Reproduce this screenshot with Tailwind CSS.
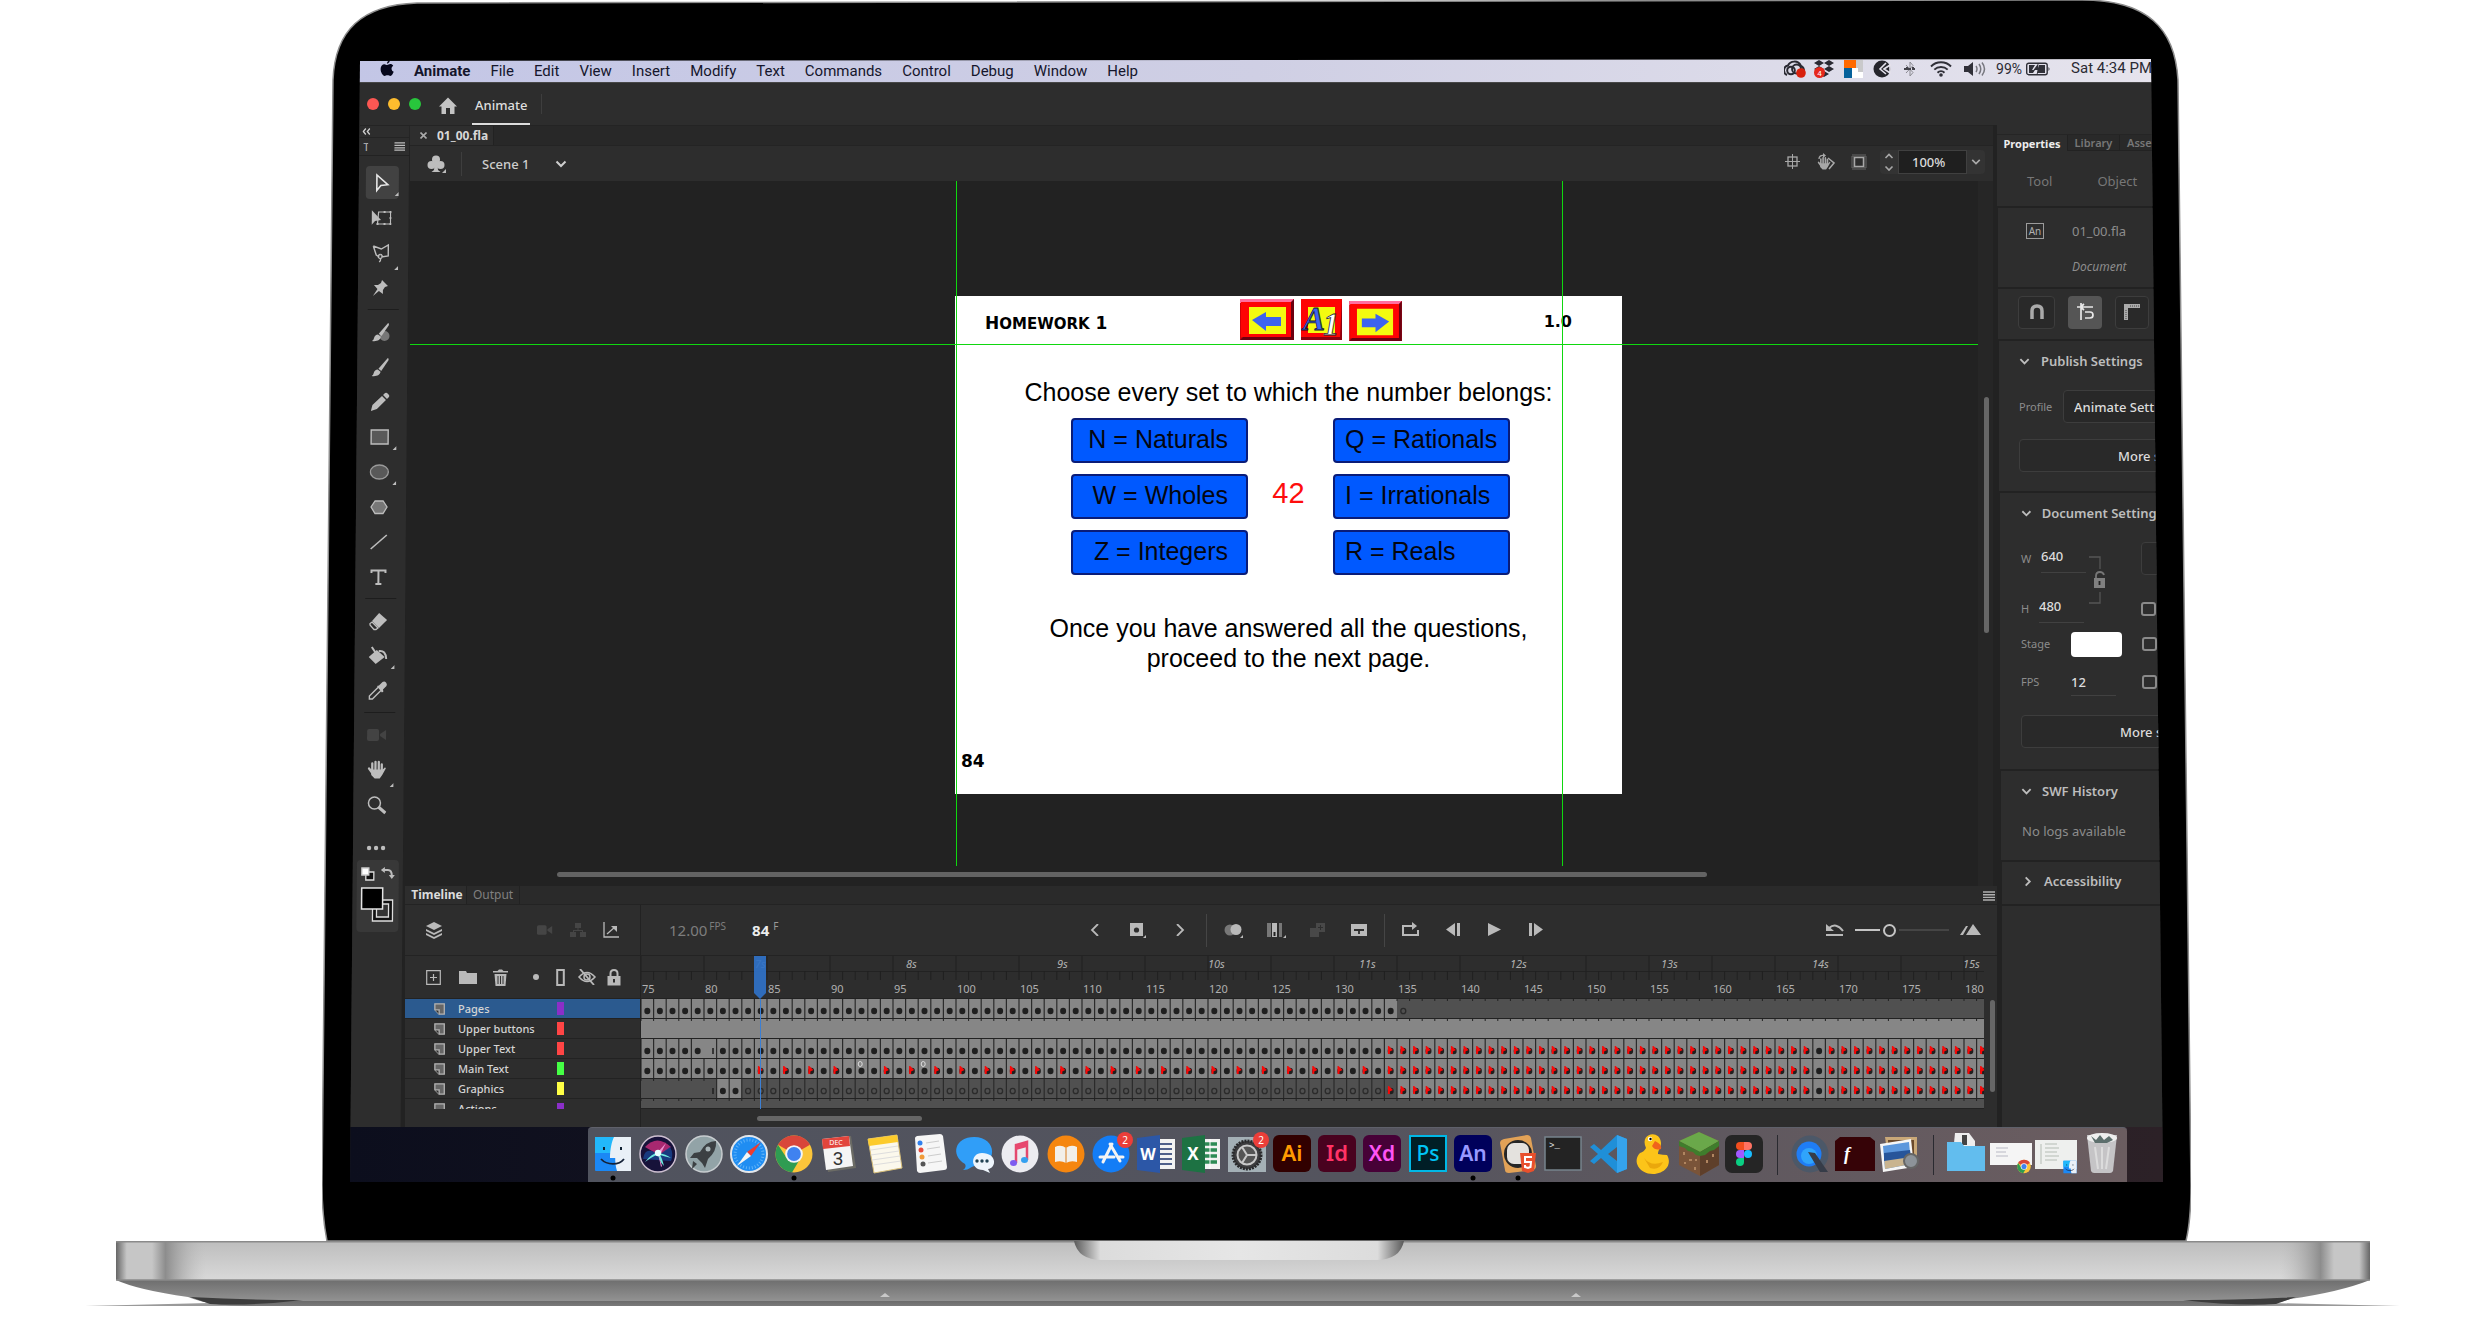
<!DOCTYPE html>
<html lang="en">
<head>
<meta charset="utf-8">
<title>Animate</title>
<script src="https://cdn.jsdelivr.net/npm/@tailwindcss/browser@4"></script>
</head>
<body class="bg-white overflow-x-hidden font-['Noto_Sans',sans-serif] text-[13px] leading-4">

<!-- shared icon shapes -->
<svg class="hidden" aria-hidden="true">
  <defs>
    <symbol id="down" viewBox="0 0 12 12"><path d="M1.500 3.500 6 8l4.500-4.500" fill="none" stroke="currentColor" stroke-width="2"/></symbol>
    <symbol id="right" viewBox="0 0 12 12"><path d="M4 1.500 8.500 6 4 10.500" fill="none" stroke="currentColor" stroke-width="2"/></symbol>
    <symbol id="menu" viewBox="0 0 12 12"><path d="M0 2h12M0 4.700h12M0 7.400h12M0 10h12" stroke="currentColor" stroke-width="1.400"/></symbol>
    <symbol id="layer" viewBox="0 0 14 14"><path d="M1 1h11v12H6L1 8z" fill="#666" stroke="#b4b4b4" stroke-width="1.500"/><path d="M1 8h5v5" fill="#2d2d2d" stroke="#b4b4b4" stroke-width="1.500"/></symbol>
    <symbol id="cam" viewBox="0 0 20 20"><rect x="0" y="4" width="12" height="12" rx="2" fill="currentColor"/><path d="M13 9l6-4v10l-6-4z" fill="currentColor"/></symbol>
    <symbol id="hand" viewBox="0 0 20 20"><path d="M5.500 3.500v7M8.700 1.800v8M12 2v8M15 4.500v6M2.300 8.500l3.700 5" stroke="currentColor" stroke-width="2.300" stroke-linecap="round" fill="none"/><path d="M4.500 9.500H16l2-2c1.500 0 1.200 1.200.5 2L15.500 15 13 18.500H8L4.500 15z" fill="currentColor"/></symbol>
    <symbol id="brush" viewBox="0 0 20 20"><path d="M17.500 1c1 .5 1 1.500.5 2.500L11 14 8.200 11.800z" fill="currentColor"/><path d="M7.500 12.500l2.800 2.300c-.3 3-3.800 5-8.800 4.200 1.500-1 1.500-1.500 2-3 .6-2 2-3.500 4-3.500z" fill="currentColor"/></symbol>
    <symbol id="chrome" viewBox="0 0 38 38"><circle cx="19" cy="19" r="18.500" fill="#fbc53a"/><path d="M19 19 3 9.700A18.500 18.500 0 0 1 35 9.700z" fill="#d9463a"/><path d="M3 9.700a18.500 18.500 0 0 0 14 27.700L25 24 11 22z" fill="#2f9c52"/><circle cx="19" cy="19" r="8.800" fill="#f5f5f5"/><circle cx="19" cy="19" r="6.900" fill="#3f82f0"/></symbol>
    <symbol id="finder" viewBox="0 0 38 38"><rect x="1" y="2" width="36" height="34" rx="1" fill="#1b88f5"/><path d="M1 2h20v16H1z" fill="#22b8fb"/><path d="M20 2h17v34H23c-1.500-5-1.800-9-1.800-13H16C16 15 17.500 7 20 2z" fill="#e9f0f7"/><path d="M10 12v3M27 12v3" stroke="#123" stroke-width="2"/><path d="M7 24c6 6.500 18 6.500 23 0" fill="none" stroke="#152238" stroke-width="1.800"/></symbol>
  </defs>
</svg>

<main class="relative">
<div class="grid grid-cols-[322fr_1869fr_286fr]">
<div class="col-start-2 relative min-w-0 pt-[59px] pb-[59px] px-7">

  <!-- laptop lid -->
  <svg class="absolute inset-0 w-full h-full -z-10" viewBox="0 0 1869 1241" preserveAspectRatio="none" aria-hidden="true">
    <path d="M11 80C13 30 40 5 95 3L1760 0C1825 0 1853 28 1856 80L1869 1185Q1869 1220 1864 1241H5Q0 1215 0 1185Z" fill="#000" stroke="#8d8d8d" stroke-width="1.500"/>
  </svg>

  <!-- display -->
  <div class="bg-[#222] overflow-hidden [clip-path:polygon(10px_2px,calc(100%_-_12px)_0,100%_100%,0_100%)]">

    <!-- system menu bar -->
    <header class="h-[23px] bg-linear-to-r from-[#c3c6e6] via-[#cfcfe4] to-[#e6e4ed] flex items-center pl-[30px] pr-[11px] text-[#15162c] font-[Roboto,sans-serif] text-[15px]">
      <svg class="w-[14px] h-[17px] mr-5 -mt-1" viewBox="0 0 14 17"><path d="M9.800.5C9.900 2 8.600 3.600 7 3.700 6.900 2.200 8.200.7 9.800.5zM7.200 5c.8 0 1.700-.9 3.100-.9 1.200 0 2.300.6 2.900 1.600-2.500 1.600-2 5 .5 6.100-.6 1.700-1.900 4-3.300 4.100-1.100 0-1.500-.7-2.900-.7s-1.800.7-2.900.7C2.800 15.900.6 12.400.6 9.100.6 6 2.500 4.200 4.400 4.200c1.200 0 2 .8 2.800.8z" fill="#06071c"/></svg>
      <nav class="flex gap-5 flex-1">
        <a href="#" class="font-bold">Animate</a><a href="#">File</a><a href="#">Edit</a><a href="#">View</a><a href="#">Insert</a><a href="#">Modify</a><a href="#">Text</a><a href="#">Commands</a><a href="#">Control</a><a href="#">Debug</a><a href="#">Window</a><a href="#">Help</a>
      </nav>
      <div class="flex items-center pb-1 text-[#2a2a33] text-sm">
        <svg class="w-[22px] h-[18px] mr-2" viewBox="0 0 22 18"><path d="M3 15a5 5 0 0 1 1-9.500C6 1 14-.5 17 6c2 1 3 3 3 5" fill="none" stroke="#2a2a33" stroke-width="2"/><circle cx="7" cy="10.500" r="3.800" fill="none" stroke="#2a2a33" stroke-width="2"/><circle cx="12.500" cy="9" r="4.500" fill="none" stroke="#2a2a33" stroke-width="1.800"/><circle cx="17" cy="13" r="4.800" fill="#d8200c"/></svg>
        <svg class="w-5 h-[18px] mr-[10px]" viewBox="0 0 20 18"><path d="M5 0l5 3-5 3-5-3zM15 0l5 3-5 3-5-3zM5 6l5 3-5 3-5-3zM15 6l5 3-5 3-5-3zM10 11l5 3-5 3-5-3z" fill="#2a2a33"/><circle cx="5.500" cy="12.500" r="5.500" fill="#e5281c"/><text x="5.500" y="15.500" text-anchor="middle" font-size="8" fill="#fff">4</text></svg>
        <svg class="w-[19px] h-[18px] mr-[10px]" viewBox="0 0 19 18"><path d="M0 0h12v8H0z" fill="#ff6a00"/><path d="M12 0h7v12h-7z" fill="#c9c9cb"/><path d="M0 8h8v10H0z" fill="#05619b"/><path d="M8 8h6v4h5v6H8z" fill="#fff"/></svg>
        <svg class="w-[18px] h-[18px] mr-[12px]" viewBox="0 0 18 18"><circle cx="9" cy="9" r="8.500" fill="#25252c"/><path d="M13 3L7 9l6 5M11 9l6-4v8z" fill="none" stroke="#e4e2ec" stroke-width="1.600"/></svg>
        <svg class="w-[14px] h-[18px] mr-[13px]" viewBox="0 0 14 18"><path d="M3 5l7 7.500L7 16V2l3 3.500L3 13" fill="none" stroke="#8b8b92"/><path d="M1 9h12M4 7v4M10 7v4" stroke="#44444c" stroke-width="2" stroke-dasharray="3 1"/></svg>
        <svg class="w-[22px] h-[16px] mr-[12px]" viewBox="0 0 22 16"><path d="M1 5.500a14 14 0 0 1 20 0M4.300 8.700a9.500 9.500 0 0 1 13.400 0M7.500 11.700a5 5 0 0 1 7 0" fill="none" stroke="#303038" stroke-width="1.900"/><circle cx="11" cy="14" r="1.800" fill="#303038"/></svg>
        <svg class="w-[22px] h-[16px] mr-[10px]" viewBox="0 0 22 16"><path d="M0 5h4l5-4v14l-5-4H0z" fill="#303038"/><path d="M12 5q2 3 0 6M15 3q3.500 5 0 10M18 1.500q5 6.500 0 13" fill="none" stroke="#77777e" stroke-width="1.500"/></svg>
        <span class="mr-1 text-sm">99%</span>
        <svg class="w-[25px] h-[14px] mr-5" viewBox="0 0 25 14"><rect x=".7" y="1.200" width="20.500" height="11.500" rx="2" fill="none" stroke="#303038" stroke-width="1.400"/><path d="M3 3h6l-3 5h3l-2 3H3zM13 3h6v8h-8l4-5h-3z" fill="#303038"/><path d="M12.500 1l-5 7h4l-1 5 5.500-7h-4z" fill="#303038"/><path d="M22.500 5v4q2-2 0-4" fill="#303038"/></svg>
        <span class="text-[15px]">Sat 4:34 PM</span>
      </div>
    </header>

    <!-- window title bar -->
    <div class="h-[43px] bg-[#2d2d2d] border-t border-[#474747] flex items-center pl-[17px]">
      <div class="flex gap-[9px]"><span class="size-3 rounded-full bg-[#fc5753]"></span><span class="size-3 rounded-full bg-[#fdbc2e]"></span><span class="size-3 rounded-full bg-[#28c63c]"></span></div>
      <button class="ml-[18px] mt-1" aria-label="Home"><svg class="size-[18px]" viewBox="0 0 18 18"><path d="M9 .5L0 9.500h2.500V17H7v-6h4v6h4.500V9.500H18z" fill="#c3c3c3"/></svg></button>
      <button class="ml-[15px] h-[41px] pt-1 px-[3px] font-medium text-[#dedede] border-b-2 border-[#dcdcdc]">Animate</button>
      <span class="ml-[11px] h-5 w-px bg-[#3e3e3e]"></span>
    </div>

    <div class="flex h-[1002px]">

      <!-- tool palette -->
      <aside class="w-[55px] shrink-0 bg-[#2d2d2d] -skew-x-[0.5deg] relative z-10 text-[#bdbdbd]">
        <div class="h-[13px] border-y border-[#242424] pl-2 flex items-center"><svg class="w-2 h-[7px]" viewBox="0 0 8 7"><path d="M3.500.5L1 3.500l2.500 3M7.500.5L5 3.500l2.500 3" fill="none" stroke="#d0d0d0" stroke-width="1.300"/></svg></div>
        <div class="h-[18px] flex items-center justify-between border-b border-[#222] pl-[9px] pr-1"><span class="w-[5px] overflow-hidden text-[11px]">T</span><svg class="w-[11px] h-[11px]"><use href="#menu"/></svg></div>
        <div class="pt-[9px] pl-[11px] flex flex-col w-[45px] items-stretch">
          <button aria-label="Selection" class="h-[35px] flex items-center justify-center relative"><span class="bg-[#424242] rounded-sm w-[33px] h-[33px] flex items-center justify-center"><svg class="size-5" viewBox="0 0 20 20"><path d="M5 2v15.500l4-5 7-.8z" fill="none" stroke="#e6e6e6" stroke-width="1.600"/></svg></span><svg class="absolute right-0 bottom-1 size-1"><path d="M4 0v4H0z" fill="currentColor"/></svg></button>
          <button aria-label="Free transform" class="h-[35px] flex items-center justify-center"><svg class="size-5" viewBox="0 0 20 20"><path d="M7 4h12v12H6z" fill="none" stroke="currentColor" stroke-width="1.200"/><path d="M0 2v15l3.500-4 6-1z" fill="currentColor"/><path d="M18 3h2v2h-2zM18 15h2v2h-2zM12 3h2v2h-2zM12 15h2v2h-2zM5 15h2v2H5zM18 9h2v2h-2z" fill="currentColor"/></svg></button>
          <button aria-label="Lasso" class="h-[35px] flex items-center justify-center relative"><svg class="size-5" viewBox="0 0 20 20"><path d="M2 3l8 3 7-4v11l-7 1M2 3l3 9 3 2M9 11.500a2 2 0 1 0 .1 0M9 15.500q1 2-1 3.500" fill="none" stroke="currentColor" stroke-width="1.400"/></svg><svg class="absolute right-0 bottom-0 size-1"><path d="M4 0v4H0z" fill="currentColor"/></svg></button>
          <button aria-label="Asset warp" class="h-[35px] flex items-center justify-center"><svg class="size-5" viewBox="0 0 20 20"><path d="M11 2l6 6-3 1-2 3v4l-4-3-6 5 4.500-7L3 7h4l3-2z" fill="currentColor"/></svg></button>
          <hr class="my-1 ml-1 w-[31px] border-[#1d1d1d]">
          <button aria-label="Fluid brush" class="h-[35px] flex items-center justify-center"><svg class="size-5" viewBox="0 0 20 20"><circle cx="14" cy="14" r="5" fill="#777"/><use href="#brush"/></svg></button>
          <button aria-label="Classic brush" class="h-[35px] flex items-center justify-center"><svg class="size-5"><use href="#brush"/></svg></button>
          <button aria-label="Pencil" class="h-[35px] flex items-center justify-center"><svg class="size-5" viewBox="0 0 20 20"><path d="M1 19l1.500-6L12 4l4 4-9 9zM13 3l2-2q1-.5 2 0l2 2q.5 1 0 2l-2 2z" fill="currentColor"/></svg></button>
          <button aria-label="Rectangle" class="h-[35px] flex items-center justify-center relative"><svg class="size-5" viewBox="0 0 20 20"><rect x="1.500" y="3" width="17" height="14" fill="#595959" stroke="currentColor" stroke-width="1.400"/></svg><svg class="absolute right-0 bottom-1 size-1"><path d="M4 0v4H0z" fill="currentColor"/></svg></button>
          <button aria-label="Oval" class="h-[35px] flex items-center justify-center relative"><svg class="size-5" viewBox="0 0 20 20"><ellipse cx="10" cy="10" rx="9" ry="7" fill="#595959" stroke="#999" stroke-width="1.400"/></svg><svg class="absolute right-0 bottom-1 size-1"><path d="M4 0v4H0z" fill="currentColor"/></svg></button>
          <button aria-label="PolyStar" class="h-[35px] flex items-center justify-center"><svg class="size-5" viewBox="0 0 20 20"><path d="M6 4h8l4 6-4 6.500H6L2 10z" fill="#777" stroke="currentColor" stroke-width="1.300"/></svg></button>
          <button aria-label="Line" class="h-[35px] flex items-center justify-center"><svg class="size-5" viewBox="0 0 20 20"><path d="M2 17L18 3" stroke="currentColor" stroke-width="1.600"/></svg></button>
          <button aria-label="Text" class="h-[35px] flex items-center justify-center"><svg class="size-5" viewBox="0 0 20 20"><path d="M3 6V3.500h14V6M10 3v14M7 17h6" stroke="currentColor" stroke-width="2" fill="none"/></svg></button>
          <hr class="my-1 ml-1 w-[31px] border-[#1d1d1d]">
          <button aria-label="Eraser" class="h-[35px] flex items-center justify-center"><svg class="size-5" viewBox="0 0 20 20"><path d="M11 2l8 7-8 8-7-7z" fill="currentColor"/><path d="M4 11l6 6-2 1.500H6L2 14v-1.500z" fill="none" stroke="currentColor" stroke-width="1.300"/></svg></button>
          <button aria-label="Paint bucket" class="h-[35px] flex items-center justify-center relative"><svg class="size-5" viewBox="0 0 20 20"><path d="M9 4l8 7-9 7-7-7z" fill="currentColor"/><path d="M4 1l6 9M11 5q7-1 7.500 8" fill="none" stroke="currentColor" stroke-width="2"/></svg><svg class="absolute right-0 bottom-1 size-1"><path d="M4 0v4H0z" fill="currentColor"/></svg></button>
          <button aria-label="Eyedropper" class="h-[35px] flex items-center justify-center"><svg class="size-5" viewBox="0 0 20 20"><path d="M11 6l3 3-9 9H2v-3z" fill="none" stroke="currentColor" stroke-width="1.400"/><path d="M9.500 5l2-.5L15 1q2-1 3.500.5T19 5l-3.500 3.500.5 2-1.500 1z" fill="currentColor"/></svg></button>
          <hr class="my-1 ml-1 w-[31px] border-[#1d1d1d]">
          <button aria-label="Camera" class="h-[35px] flex items-center justify-center text-[#434343]"><svg class="size-5"><use href="#cam"/></svg></button>
          <button aria-label="Hand" class="h-[35px] flex items-center justify-center relative"><svg class="size-5"><use href="#hand"/></svg><svg class="absolute right-0 bottom-0 size-1"><path d="M4 0v4H0z" fill="currentColor"/></svg></button>
          <button aria-label="Zoom" class="h-[35px] flex items-center justify-center"><svg class="size-5" viewBox="0 0 20 20"><circle cx="8" cy="8" r="6" fill="none" stroke="currentColor" stroke-width="1.500"/><path d="M12 12l7 6" stroke="currentColor" stroke-width="3"/></svg></button>
          <button aria-label="More tools" class="h-[22px] mt-[15px] flex items-center justify-center"><svg class="w-5 h-2" viewBox="0 0 20 8"><circle cx="3" cy="4" r="2.200" fill="currentColor"/><circle cx="10" cy="4" r="2.200" fill="currentColor"/><circle cx="17" cy="4" r="2.200" fill="currentColor"/></svg></button>
        </div>
        <div class="ml-[9px] mt-px w-[42px] h-[72px] rounded bg-[#383838]">
          <svg class="w-full h-full" viewBox="0 0 42 72"><path d="M9 12h8v8H9z" fill="#111" stroke="#ddd" stroke-width="1.300"/><path d="M5 8h7v7H5z" fill="#fff" stroke="#ccc" stroke-width="1.300"/><path d="M27 10h4q4 0 4 6" fill="none" stroke="#bdbdbd" stroke-width="2"/><path d="M24 10l4-3v6zM32 15h6l-3 4z" fill="#bdbdbd"/><path d="M16 40h20v21H16z" fill="#111" stroke="#ddd" stroke-width="1.300"/><path d="M20 44h12v13H20z" fill="#333" stroke="#ddd" stroke-width="1.300"/><path d="M5 28h21v21H5z" fill="#000" stroke="#e4e4e4" stroke-width="1.500"/></svg>
        </div>
      </aside>

      <section class="flex-1 min-w-0">
        <div class="ml-[5px] mr-1">
          <div class="h-[21px] bg-[#282828] flex border-y border-[#242424]"><button class="flex items-center gap-[10px] w-[84px] pl-[10px] bg-[#2e2e2e] border-r border-[#222] text-xs font-bold text-[#d8d8d8]"><svg class="size-[7px]" viewBox="0 0 7 7"><path d="M.5.5l6 6M6.500.5l-6 6" stroke="#aaa" stroke-width="1.600"/></svg>01_00.fla</button></div>
          <div class="h-[35px] bg-[#2d2d2d] flex items-center text-[#cecece]">
            <button aria-label="Edit symbols" class="ml-[17px]"><svg class="w-[19px] h-[18px]" viewBox="0 0 19 18"><circle cx="9" cy="4.500" r="4" fill="#bdbdbd"/><circle cx="4.500" cy="10" r="4" fill="#bdbdbd"/><circle cx="13.500" cy="10" r="4" fill="#bdbdbd"/><path d="M8 5h2l1 10 2.500 2h-9L7 15z" fill="#bdbdbd"/><path d="M19 14v4h-4z" fill="#bdbdbd"/></svg></button>
            <span class="w-px h-6 bg-[#3e3e3e] ml-[15px] mr-5"></span>
            <button class="flex items-center gap-[26px] font-medium">Scene 1<svg class="size-3"><use href="#down"/></svg></button>
            <div class="ml-auto flex items-center text-[#a8a8a8] pb-1">
              <button aria-label="Center stage"><svg class="size-[15px]" viewBox="0 0 15 15"><path d="M7.500 0v15M0 7.500h15" stroke="currentColor"/><rect x="3" y="3" width="9" height="9" fill="none" stroke="currentColor" stroke-width="1.300"/></svg></button>
              <button aria-label="Rotate" class="ml-[17px]"><svg class="w-[18px] h-[18px]" viewBox="0 0 18 18"><svg x="0" y="3" width="14" height="15"><use href="#hand"/></svg><path d="M11 5l6 5-5 6" fill="none" stroke="currentColor" stroke-width="1.500"/><path d="M2 6q0-4 5-3.500" fill="none" stroke="currentColor" stroke-width="1.300"/><path d="M6 0l3 2.500L6 5z" fill="currentColor"/></svg></button>
              <button aria-label="Clip content" class="ml-4"><svg class="size-[16px]" viewBox="0 0 16 16"><rect x="1.500" y="1.500" width="13" height="13" fill="none" stroke="#666" stroke-width="3" stroke-dasharray="1 1"/><rect x="3.500" y="3.500" width="9" height="9" fill="#2d2d2d" stroke="currentColor" stroke-width="1.500"/></svg></button>
              <div class="ml-[13px] mr-2 flex items-center bg-[#333] rounded-sm h-6">
                <svg class="w-[18px] h-5" viewBox="0 0 18 20"><path d="M5.500 6L9 2.500 12.500 6M5.500 14.500L9 18l3.500-3.500" fill="none" stroke="currentColor" stroke-width="1.600"/></svg>
                <input aria-label="Zoom" value="100%" class="w-[69px] h-6 bg-[#1f1f1f] border border-[#404040] text-[#dadada] text-[13px] font-medium pl-[13px]">
                <svg class="w-[10px] h-[10px] mx-1"><use href="#down"/></svg>
              </div>
            </div>
          </div>

          <!-- pasteboard -->
          <div class="h-[705px] relative bg-[#222] border-r-[15px] border-[#262626] pt-[115px] pl-[545px]">
            <div class="w-[667px] h-[498px] bg-white text-black font-['Liberation_Sans',Arial,sans-serif] text-[25px] leading-[30px]">
              <div class="h-[47px] flex items-center pl-[30px] pr-[50px] font-['DejaVu_Sans',sans-serif] font-bold">
                <span class="w-[255px] text-[17px] pt-2">H<span class="text-[15px] uppercase">omework</span> 1</span>
                <div class="flex gap-[7px]">
                  <button aria-label="Previous page"><svg class="w-[54px] h-[41px]" viewBox="0 0 54 41"><path d="M0 0h54v41H0z" fill="#d00008"/><path d="M0 0h54l-3 4H0z" fill="#ff6fa0"/><path d="M54 0v41H0l3-3h48V3z" fill="#6d0010"/><path d="M1 3h50v35H1z" fill="#fe0404"/><path d="M9 8h37v27H9z" fill="#f3fb10"/><path d="M12 21l14-8v5h15v9H26v5z" fill="#3d63ef"/></svg></button>
                  <button aria-label="Contents"><svg class="w-[41px] h-[41px]" viewBox="0 0 41 41"><path d="M0 0h41v41H0z" fill="#8d0010"/><path d="M0 0h41l-2 38H0z" fill="#fe0404"/><path d="M7 8h27v26H7z" fill="#f3fb10"/><text x="2" y="31" font-family="Liberation Serif" font-style="italic" font-weight="bold" font-size="33" fill="#3d63ef" stroke="#112" stroke-width=".8">A</text><text x="22" y="36" font-family="Liberation Serif" font-style="italic" font-weight="bold" font-size="32" fill="#fff" stroke="#222" stroke-width=".8">1</text></svg></button>
                  <button aria-label="Next page" class="pt-[3px]"><svg class="w-[53px] h-[40px]" viewBox="0 0 54 41"><path d="M0 0h54v41H0z" fill="#d00008"/><path d="M0 0h54l-3 4H0z" fill="#ff6fa0"/><path d="M54 0v41H0l3-3h48V3z" fill="#6d0010"/><path d="M1 3h50v35H1z" fill="#fe0404"/><path d="M8 8h37v27H8z" fill="#f3fb10"/><path d="M41 21l-14-8v5H13v9h14v5z" fill="#3d63ef"/></svg></button>
                </div>
                <span class="ml-auto text-base pt-1">1.0</span>
              </div>
              <p class="text-center pt-[34px]">Choose every set to which the number belongs:</p>
              <div class="grid grid-cols-[177px_85px_177px] gap-y-[11px] justify-center pl-1 mt-[11px] text-[#04060f]">
                <button class="h-[45px] bg-[#0059ff] border-2 border-[#0a1c78] rounded pr-[18px] pb-1 text-right whitespace-nowrap">N = Naturals</button>
                <span class="row-span-3 self-center text-center text-[29px] text-[#fe0d0d] pb-2 pr-1">42</span>
                <button class="h-[45px] bg-[#0059ff] border-2 border-[#0a1c78] rounded px-[10px] pb-1 text-left whitespace-nowrap">Q = Rationals</button>
                <button class="h-[45px] bg-[#0059ff] border-2 border-[#0a1c78] rounded pr-[18px] pb-1 text-right whitespace-nowrap">W = Wholes</button>
                <button class="h-[45px] bg-[#0059ff] border-2 border-[#0a1c78] rounded px-[10px] pb-1 text-left whitespace-nowrap">I = Irrationals</button>
                <button class="h-[45px] bg-[#0059ff] border-2 border-[#0a1c78] rounded pr-[18px] pb-1 text-right whitespace-nowrap">Z = Integers</button>
                <button class="h-[45px] bg-[#0059ff] border-2 border-[#0a1c78] rounded px-[10px] pb-1 text-left whitespace-nowrap">R = Reals</button>
              </div>
              <p class="text-center mt-[38px]">Once you have answered all the questions,<br>proceed to the next page.</p>
              <p class="pl-[6px] mt-[73px] font-['DejaVu_Sans',sans-serif] font-bold text-[17px]">84</p>
            </div>
            <i class="absolute left-0 right-0 top-[163px] h-px bg-[#0fd80f]"></i>
            <i class="absolute top-0 h-[685px] left-[546px] w-px bg-[#0fd80f]"></i>
            <i class="absolute top-0 h-[685px] left-[1152px] w-px bg-[#0fd80f]"></i>
            <i class="absolute -right-[11px] top-[216px] w-[5px] h-[236px] rounded-full bg-[#666]"></i>
            <i class="absolute left-[147px] bottom-[9px] w-[1150px] h-[5px] rounded-full bg-[#636363]"></i>
          </div>
        </div>

        <!-- timeline -->
        <div class="bg-[#2d2d2d]">
          <div class="h-[19px] flex bg-[#2a2a2a] border-b border-[#232323] text-xs text-[#808080]">
            <button class="w-[62px] pl-[3px] bg-[#2d2d2d] border-r border-[#222] font-bold text-[#dcdcdc]">Timeline</button>
            <button class="w-[53px] border-r border-[#222]">Output</button>
            <svg class="size-3 ml-auto mt-1 mr-[2px] text-[#b0b0b0]"><use href="#menu"/></svg>
          </div>
          <div class="h-[51px] flex border-b border-[#232323] text-[#b9b9b9]">
            <div class="w-[236px] shrink-0 border-r border-[#222] flex items-center pl-5 pr-[21px]">
              <button aria-label="Layers" class="mr-auto"><svg class="size-[18px]" viewBox="0 0 18 18"><path d="M9 1l8 4-8 4-8-4zM1 8l8 4 8-4v2l-8 4-8-4zM1 12l8 4 8-4v2l-8 4-8-4z" fill="currentColor"/></svg></button>
              <div class="flex items-center gap-[17px]">
                <svg class="size-4 text-[#454545]"><use href="#cam"/></svg>
                <svg class="size-4 text-[#454545]" viewBox="0 0 16 16"><path d="M5 1h6v5H5zM0 10h6v5H0zM10 10h6v5h-6zM7.500 6h1v2H13v2h-1V9H4v1H3V8h4.500z" fill="currentColor"/></svg>
                <svg class="size-4" viewBox="0 0 16 16"><path d="M1 0v15h15M4 12l8-7" fill="none" stroke="currentColor" stroke-width="1.300"/><path d="M8 4h6v6z" fill="currentColor"/></svg>
              </div>
            </div>
            <div class="flex items-center w-[448px] pl-7 whitespace-nowrap">
              <span class="text-[15px] text-[#7d7d7d]">12.00</span><span class="text-[10px] text-[#7d7d7d] pb-2 pl-[2px]">FPS</span>
              <span class="ml-[26px] text-[15px] font-bold text-[#ececec]">84</span><span class="ml-1 text-[10px] pb-2 text-[#999]">F</span>
            </div>
            <div class="flex items-center">
              <button aria-label="Previous keyframe" class="w-[12px]"><svg class="size-3" viewBox="0 0 12 12"><path d="M9 0L3 6l6 6" fill="none" stroke="currentColor" stroke-width="1.800"/></svg></button>
              <button aria-label="Insert keyframe" class="ml-[29px]"><svg class="w-[16px] h-4" viewBox="0 0 16 16"><path d="M0 1h13v13H0z" fill="currentColor"/><circle cx="6.500" cy="8" r="2.600" fill="#2d2d2d"/><path d="M16 13v3h-3z" fill="currentColor"/></svg></button>
              <button aria-label="Next keyframe" class="ml-[28px]"><svg class="size-3" viewBox="0 0 12 12"><path d="M3 0l6 6-6 6" fill="none" stroke="currentColor" stroke-width="1.800"/></svg></button>
              <span class="w-px h-[33px] bg-[#454545] ml-[20px] mr-[17px]"></span>
              <button aria-label="Onion skin"><svg class="w-[19px] h-4" viewBox="0 0 19 16"><circle cx="6" cy="8" r="5.500" fill="#777"/><circle cx="12" cy="7.500" r="5.500" fill="currentColor"/><path d="M19 13v3h-3z" fill="currentColor"/></svg></button>
              <button aria-label="Edit multiple frames" class="ml-[24px]"><svg class="w-[19px] h-4" viewBox="0 0 19 16"><path d="M0 1h4v14H0zM12 1h3v14h-3z" fill="#777"/><path d="M5 1h5v14H5z" fill="currentColor"/><path d="M7.500 10v4" stroke="#222" stroke-width="2"/><path d="M19 13v3h-3z" fill="currentColor"/></svg></button>
              <button aria-label="Create tween" class="ml-[24px]"><svg class="w-[18px] h-4" viewBox="0 0 18 16"><path d="M0 6h9v9H0zM6 1h9v9H6z" fill="#484848"/><path d="M8 5.500h5M10.500 3v5" stroke="#2d2d2d"/></svg></button>
              <button aria-label="Frame view" class="ml-[23px]"><svg class="w-4 h-4" viewBox="0 0 16 16"><path d="M0 2h16v12H0z" fill="currentColor"/><path d="M3 8h10M8 8v4" stroke="#2d2d2d" stroke-width="1.800"/></svg></button>
              <span class="w-px h-[33px] bg-[#454545] mx-[17px]"></span>
              <button aria-label="Loop"><svg class="w-[18px] h-4" viewBox="0 0 18 16"><path d="M5 4H1v9h15V8M5 4h7" fill="none" stroke="currentColor" stroke-width="2"/><path d="M10 0l5 4-5 4z" fill="currentColor"/></svg></button>
              <button aria-label="Step back" class="ml-[26px]"><svg class="size-4" viewBox="0 0 16 16"><path d="M9 1v13L0 7.500zM11 1h3v13h-3z" fill="currentColor"/></svg></button>
              <button aria-label="Play" class="ml-[25px]"><svg class="size-4" viewBox="0 0 16 16"><path d="M1 1l13 6.500L1 14z" fill="currentColor"/></svg></button>
              <button aria-label="Step forward" class="ml-[25px]"><svg class="size-4" viewBox="0 0 16 16"><path d="M6 1v13l9-6.500zM1 1h3v13H1z" fill="currentColor"/></svg></button>
            </div>
            <div class="ml-auto mr-[16px] flex items-center">
              <svg class="w-[18px] h-4" viewBox="0 0 18 16"><path d="M3 6q7-6 14 3" fill="none" stroke="currentColor" stroke-width="2"/><path d="M0 2v7h8zM0 12h17v2H0z" fill="currentColor"/></svg>
              <input type="range" aria-label="Timeline zoom" min="0" max="100" value="34" class="appearance-none w-[94px] h-[14px] mx-[11px] bg-[linear-gradient(to_right,#c4c4c4_25px,transparent_25px,transparent_44px,#454545_44px)] bg-[length:100%_2px] bg-center bg-no-repeat [&::-webkit-slider-thumb]:appearance-none [&::-webkit-slider-thumb]:size-[13px] [&::-webkit-slider-thumb]:rounded-full [&::-webkit-slider-thumb]:border-2 [&::-webkit-slider-thumb]:border-[#c4c4c4] [&::-webkit-slider-thumb]:border-solid">
              <svg class="w-[21px] h-4" viewBox="0 0 21 16"><path d="M6 13l7-11 8 11zM0 13l6-9h2l-5 9z" fill="currentColor"/></svg>
            </div>
          </div>
          <div class="flex h-[153px]">
            <div class="w-[236px] shrink-0 border-r border-[#222] text-[11px] font-medium text-[#d4d4d4]">
              <div class="h-[43px] flex items-center border-b border-[#222] pl-[21px]">
                <svg class="size-[15px]" viewBox="0 0 15 15"><path d="M.7.7h13.600v13.600H.7zM7.500 4v7M4 7.500h7" fill="none" stroke="#b9b9b9" stroke-width="1.200"/></svg>
                <svg class="w-[18px] h-4 ml-[18px]" viewBox="0 0 18 16"><path d="M0 2h7l1 2h10v11H0z" fill="#b9b9b9"/></svg>
                <svg class="w-[15px] h-[17px] ml-4" viewBox="0 0 15 17"><path d="M0 2h4.500L6 .5h3L10.500 2H15v1.500H0zM1.500 5h12l-1 12h-10z" fill="#b9b9b9"/><path d="M5 7v8M7.500 7v8M10 7v8" stroke="#333"/></svg>
                <svg class="w-2 h-2 ml-6" viewBox="0 0 8 8"><circle cx="4" cy="4" r="3" fill="#b9b9b9"/></svg>
                <svg class="w-[9px] h-[17px] ml-4" viewBox="0 0 9 17"><path d="M1.200 1h6.600v15H1.200z" fill="none" stroke="#b9b9b9" stroke-width="2"/></svg>
                <svg class="w-[18px] h-4 ml-[13px]" viewBox="0 0 18 16"><path d="M1 8q8-9 16 0-8 9-16 0z" fill="none" stroke="#b9b9b9" stroke-width="1.600"/><circle cx="9" cy="8" r="3" fill="none" stroke="#b9b9b9" stroke-width="1.500"/><path d="M2 0l14 16" stroke="#b9b9b9" stroke-width="1.800"/></svg>
                <svg class="w-[14px] h-[17px] ml-[11px]" viewBox="0 0 14 17"><path d="M3.500 8V4.500q0-3.500 3.500-3.500t3.500 3.500V8" fill="none" stroke="#b9b9b9" stroke-width="2"/><path d="M.5 7h13v9.500H.5z" fill="#b9b9b9"/><path d="M7 10v3.500" stroke="#2d2d2d" stroke-width="2"/></svg>
              </div>
              <ul class="h-[110px] overflow-hidden">
                <li class="h-5 flex items-center border-b border-[#222] pl-[29px] bg-[#2b5a8f]"><svg class="w-3 h-3 mr-3"><use href="#layer"/></svg><span class="w-[99px]">Pages</span><i class="w-[7px] h-[13px] bg-[#8b2fc8]"></i></li>
                <li class="h-5 flex items-center border-b border-[#222] pl-[29px]"><svg class="w-3 h-3 mr-3"><use href="#layer"/></svg><span class="w-[99px]">Upper buttons</span><i class="w-[7px] h-[13px] bg-[#ff4545]"></i></li>
                <li class="h-5 flex items-center border-b border-[#222] pl-[29px]"><svg class="w-3 h-3 mr-3"><use href="#layer"/></svg><span class="w-[99px]">Upper Text</span><i class="w-[7px] h-[13px] bg-[#ff4545]"></i></li>
                <li class="h-5 flex items-center border-b border-[#222] pl-[29px]"><svg class="w-3 h-3 mr-3"><use href="#layer"/></svg><span class="w-[99px]">Main Text</span><i class="w-[7px] h-[13px] bg-[#45ff45]"></i></li>
                <li class="h-5 flex items-center border-b border-[#222] pl-[29px]"><svg class="w-3 h-3 mr-3"><use href="#layer"/></svg><span class="w-[99px]">Graphics</span><i class="w-[7px] h-[13px] bg-[#ffff45]"></i></li>
                <li class="h-5 flex items-center pl-[29px]"><svg class="w-3 h-3 mr-3"><use href="#layer"/></svg><span class="w-[99px]">Actions</span><i class="w-[7px] h-[13px] bg-[#8b2fc8]"></i></li>
              </ul>
            </div>
            <div class="flex-1 min-w-0 relative overflow-hidden text-[11px] text-[#b0b0b0]">
              <div class="h-[43px] relative">
                <svg id="ruler" class="absolute inset-0 w-[1400px] h-[43px]"></svg>
                <div id="seconds" class="relative flex h-4 pl-[114px] italic"></div>
                <div id="numbers" class="relative flex pt-[9px]"></div>
              </div>
              <svg id="frames" class="block w-[1400px] h-[110px]"></svg>
              <svg class="absolute left-[113px] top-0 w-[13px] h-[153px]"><path d="M0 0h12v37l-6 6-6-6z" fill="#2f71c6" fill-opacity=".93"/><path d="M6.500 43v110" stroke="#3b7fd4"/></svg>
            </div>
            <div class="w-[13px] shrink-0 pl-[6px] pt-[44px]"><div class="w-[5px] h-[92px] rounded-full bg-[#666]"></div></div>
          </div>
          <div class="h-[18px] ml-[235px] border-l border-[#222] pl-[116px] pt-[7px]"><div class="w-[165px] h-[5px] rounded-full bg-[#666]"></div></div>
        </div>
      </section>

      <!-- properties -->
      <aside class="w-[166px] shrink-0 flex flex-col items-end text-[#8c8c8c] whitespace-nowrap [&_section]:bg-[#2d2d2d]">
        <section class="w-full">
          <div class="h-[10px] border-b border-[#252525]"></div>
          <div class="h-4 flex text-[11px] leading-[15px] font-semibold text-[#777] bg-[#292929]"><button class="w-[70px] bg-[#2d2d2d] text-[#ededed] font-bold">Properties</button><button class="w-[53px] border-x border-b border-[#222]">Library</button><button class="pl-[7px] border-b border-[#222]">Assets</button></div>
          <div class="h-[55px] flex items-center pl-[30px] pt-1 gap-[45px] text-[#777]"><button>Tool</button><button>Object</button></div>
        </section>
        <section class="w-[165px] mt-[2px] h-[79px] pl-[28px] pt-[15px]">
          <div class="flex gap-[28px] items-center"><span class="w-[18px] h-4 border border-[#9b9b9b] text-[10px] leading-[14px] text-center text-[#b0b0b0]">An</span><span>01_00.fla</span></div>
          <p class="italic text-xs ml-[46px] mt-5">Document</p>
        </section>
        <section class="w-[165px] mt-[2px] h-[50px] pl-5 pb-1 flex items-center gap-[13px]">
          <button aria-label="Snap" class="w-[37px] h-[33px] rounded border border-[#3d3d3d] bg-[#292929] flex items-center justify-center"><svg class="size-4" viewBox="0 0 16 16"><path d="M3 15V7q0-5 5-5t5 5v8" fill="none" stroke="#aaa" stroke-width="3.500"/></svg></button>
          <button aria-label="Snap align" class="w-[34px] h-[33px] rounded bg-[#555] flex items-center justify-center"><svg class="size-[18px]" viewBox="0 0 18 18"><path d="M1 4h16M5 0v17M8 1L4.500 4 8 7M9 9h5q3 0 3 3t-3 3H9" fill="none" stroke="#e8e8e8" stroke-width="1.700"/></svg></button>
          <button aria-label="Rulers" class="w-[34px] h-[33px] rounded border border-[#3d3d3d] bg-[#292929] flex items-center justify-center"><svg class="size-4" viewBox="0 0 16 16"><path d="M0 0h16v4H4v12H0z" fill="#aaa"/><path d="M6 2h9M2 6v9" stroke="#444" stroke-dasharray="1 1"/></svg></button>
        </section>
        <section class="w-[164px] mt-[2px] h-[150px] pl-5 pt-3">
          <h2 class="flex items-center gap-[11px] font-semibold text-[#bdbdbd]"><svg class="size-[11px]"><use href="#down"/></svg>Publish Settings</h2>
          <div class="flex items-center mt-[21px] text-[11px]"><label for="profile" class="w-11 shrink-0">Profile</label><select id="profile" class="appearance-none w-[140px] shrink-0 h-[33px] rounded border border-[#3d3d3d] bg-[#282828] text-[#dcdcdc] text-[13px] font-medium pl-[10px]"><option>Animate Settings</option></select></div>
          <button class="mt-4 w-[272px] h-[33px] rounded border border-[#3d3d3d] bg-[#292929] text-[#dcdcdc] font-medium text-left pl-[98px]">More settings</button>
        </section>
        <section class="w-[163px] mt-[2px] h-[276px] pl-[21px] pt-3 text-[11px]">
          <h2 class="flex items-center gap-[10px] font-semibold text-[13px] text-[#bdbdbd]"><svg class="size-[11px]"><use href="#down"/></svg>Document Settings</h2>
          <div class="flex mt-[21px]">
            <div class="w-[67px] shrink-0 pt-[2px]">
              <div class="flex items-center"><label for="w" class="w-[20px]">W</label><input id="w" value="640" class="w-[45px] h-[29px] pb-1 border-b border-[#414141] bg-transparent text-[#dcdcdc] text-[13px] font-medium"></div>
              <div class="flex items-center mt-[21px]"><label for="h" class="w-[18px]">H</label><input id="h" value="480" class="w-[45px] h-[29px] pb-1 border-b border-[#414141] bg-transparent text-[#dcdcdc] text-[13px] font-medium"></div>
            </div>
            <svg class="w-5 h-[65px] mt-1 shrink-0" viewBox="0 0 20 65"><path d="M1 11h11v12M12 46v11H1" fill="none" stroke="#555" stroke-width="1.300"/><path d="M8 33v-3q0-4 4-4 3 0 4 3" fill="none" stroke="#777" stroke-width="1.800"/><path d="M6 32h11v10H6z" fill="#808080"/><path d="M11.500 35v4" stroke="#222" stroke-width="1.800"/></svg>
            <div class="ml-[33px] shrink-0"><button aria-label="Match contents" class="w-[100px] h-[33px] rounded border border-[#3d3d3d] bg-[#292929] block"></button><input type="checkbox" aria-label="Scale content" class="appearance-none block mt-[27px] w-[15px] h-[14px] rounded-[3px] border-2 border-[#8a8a8a]"></div>
          </div>
          <div class="flex items-center mt-[7px] h-7"><label for="stage" class="w-[50px] shrink-0">Stage</label><button id="stage" aria-label="Stage colour" class="w-[51px] h-[25px] shrink-0 rounded bg-white"></button><input type="checkbox" aria-label="Scale spans" class="appearance-none ml-5 w-[15px] h-[14px] shrink-0 rounded-[3px] border-2 border-[#8a8a8a]"></div>
          <div class="flex items-center mt-[10px] h-7"><label for="fps" class="w-[50px] shrink-0">FPS</label><input id="fps" value="12" class="w-[45px] h-7 shrink-0 border-b border-[#414141] bg-transparent text-[#dcdcdc] text-[13px] font-medium"><input type="checkbox" aria-label="Clip" class="appearance-none ml-[26px] w-[15px] h-[14px] shrink-0 rounded-[3px] border-2 border-[#8a8a8a]"></div>
          <button class="mt-[19px] w-[272px] h-[33px] rounded border border-[#3d3d3d] bg-[#292929] text-[#dcdcdc] text-[13px] font-medium text-left pl-[98px]">More settings</button>
        </section>
        <section class="w-[162px] mt-[2px] h-[89px] pl-5 pt-[12px]">
          <h2 class="flex items-center gap-[10px] font-semibold text-[#bdbdbd]"><svg class="size-[11px]"><use href="#down"/></svg>SWF History</h2>
          <p class="mt-6 pl-px">No logs available</p>
        </section>
        <section class="w-[161px] mt-[2px] h-[42px] pl-5 pb-1 flex items-center"><h2 class="flex items-center gap-[11px] font-semibold text-[#bdbdbd]"><svg class="size-[11px]"><use href="#right"/></svg>Accessibility</h2></section>
        <section class="w-[161px] mt-[2px] flex-1"></section>
      </aside>
    </div>

    <!-- dock -->
    <footer class="h-[55px] bg-linear-to-r from-[#0c0e1d] to-[#2c2127] pl-[238px] pr-9">
      <div class="h-full rounded-t border-t border-[#5f606a] bg-linear-to-r from-[#50535e] via-[#54545e] to-[#6b5d60] px-[6px] pt-[7px] flex justify-between items-start [&>svg]:w-[38px] [&>svg]:h-[38px] [&>svg]:shrink-0 [&>svg]:overflow-visible [&_b]:w-px [&_b]:h-10 [&_b]:bg-[#2a2a30] [&_b]:mx-[6px]">
        <svg viewBox="0 0 38 38"><use href="#finder"/><circle cx="19" cy="43" r="2.500"/></svg>
        <svg viewBox="0 0 38 38"><circle cx="19" cy="19" r="18" fill="#17123a" stroke="#cdbfd0" stroke-width="1.500"/><path d="M6 12Q18-1 32 12L20 20z" fill="#a82870"/><path d="M4 24Q6 10 20 20L31 12q4 7 1 14z" fill="#1a4c9c" fill-opacity=".7"/><path d="M6 27q7-9 13-9 8 1 13 5-8-2-11-3 2 3 4 11-5-5-6-12-6 3-13 8z" fill="#6ee9df"/><path d="M19 18l3 14 1-1zM19 17l8-9-5 10z" fill="#ee8fd0"/><circle cx="19" cy="18" r="3.200" fill="#eaffff"/></svg>
        <svg viewBox="0 0 38 38"><circle cx="19" cy="19" r="18" fill="#92a3a7" stroke="#c8cdd0" stroke-width="1.500"/><path d="M31 6q1 10-8 18l-3 9-3-5-5-5-7 0 4-5 6-1Q21 6 31 6zM8 26l4 3-5 5z" fill="#3c4043"/><circle cx="23" cy="14" r="2.500" fill="#a9b5b8"/></svg>
        <svg viewBox="0 0 38 38"><circle cx="19" cy="19" r="18" fill="#1f8df2" stroke="#e3e6ea" stroke-width="2"/><circle cx="19" cy="19" r="14" fill="none" stroke="#5fb2f8" stroke-width="3" stroke-dasharray="1 2"/><path d="M31 7L21 21l-4-4z" fill="#ef3b30"/><path d="M7 31l10-14 4 4z" fill="#f4f4f4"/></svg>
        <svg viewBox="0 0 38 38"><use href="#chrome"/><circle cx="19" cy="43" r="2.500"/></svg>
        <svg viewBox="0 0 38 38"><path d="M3 4l28-3 5 32-28 4z" fill="#6b6b65"/><path d="M2 4l27-3 4 30-27 4z" fill="#f5f5f5"/><path d="M2 4l27-3 1 10-27 3z" fill="#e2453c"/><text x="16" y="10" text-anchor="middle" font-size="7" fill="#fff">DEC</text><text x="18" y="30" text-anchor="middle" font-size="19" fill="#333" font-family="Roboto">3</text></svg>
        <svg viewBox="0 0 38 38"><path d="M2 4l29-4 5 33-28 5z" fill="#fbf8ec" stroke="#d8bf7a"/><path d="M2 4l29-4 1 7-29 4z" fill="#fccb2c"/><path d="M5 15l27-4M5 20l28-4M6 25l28-4M7 30l28-4" stroke="#ddd"/></svg>
        <svg viewBox="0 0 38 38"><path d="M4 3Q4 2 6 1l23-2q2 0 3 2l4 31q0 3-3 3l-24 3q-2 0-3-2z" fill="#f6f6f6"/><circle cx="9" cy="8" r="2.500" fill="#3080ee"/><circle cx="10" cy="15" r="2.500" fill="#e84b3c"/><circle cx="11" cy="22" r="2.500" fill="#f09a38"/><circle cx="12" cy="29" r="2.500" fill="#555"/><path d="M15 8l13-2M16 14l13-2M17 21l13-2M17 28l14-2" stroke="#ccc"/></svg>
        <svg viewBox="0 0 38 38"><path d="M18 2c24 0 24 29 1 29-4 0-5 4-12 4 3-2 3-4 2-6C-6 20-1 2 18 2z" fill="#309ef8"/><path d="M26 18c15 0 15 15 6 16l2 4-7-3c-13 0-13-17-1-17z" fill="#eef5fc"/><circle cx="21" cy="26" r="1.700" fill="#245"/><circle cx="26" cy="26" r="1.700" fill="#245"/><circle cx="31" cy="26" r="1.700" fill="#245"/></svg>
        <svg viewBox="0 0 38 38"><circle cx="19" cy="19" r="18.500" fill="#ececf1"/><path d="M15 28V10l11-3v18" fill="none" stroke="#e4486e" stroke-width="2.500"/><path d="M15 10l11-3v5l-11 3z" fill="#e8476f"/><ellipse cx="12.500" cy="28" rx="3.500" ry="3" fill="#7d5cf0"/><ellipse cx="23.500" cy="25" rx="3.500" ry="3" fill="#35a0f0"/></svg>
        <svg viewBox="0 0 38 38"><circle cx="19" cy="19" r="18.500" fill="#f5860f"/><path d="M8 12q6-3 11 1 5-4 11-1v15q-6-2-11 1-5-3-11-1z" fill="#f2efe9"/><path d="M19 13v15" stroke="#d97c1d"/></svg>
        <svg viewBox="0 0 38 38"><circle cx="19" cy="19" r="18.500" fill="#137df6"/><path d="M20 9l-9 18M18 9l10 17M8 22h14M26 22h5" stroke="#f4f4f4" stroke-width="3" stroke-linecap="round"/><circle cx="33" cy="5" r="8" fill="#ec3e39"/><text x="33" y="8.500" text-anchor="middle" font-size="10" fill="#fff">2</text></svg>
        <svg viewBox="0 0 38 38"><path d="M18 4h20v30H18z" fill="#f2f2f2"/><path d="M20 9h15M20 14h15M20 19h15M20 24h15M20 29h15" stroke="#4f5f8a" stroke-width="2"/><path d="M0 3l23-3v38L0 35z" fill="#2c57a7"/><text x="11" y="25" text-anchor="middle" font-size="16" font-weight="bold" fill="#fff">W</text></svg>
        <svg viewBox="0 0 38 38"><path d="M18 4h20v30H18z" fill="#f2f2f2"/><path d="M21 9h14M21 15h14M21 21h14M21 27h14" stroke="#2d8b55" stroke-width="3.500"/><path d="M28 4v30" stroke="#fff"/><path d="M0 3l23-3v38L0 35z" fill="#1d7243"/><text x="11" y="25" text-anchor="middle" font-size="17" font-weight="bold" fill="#fff">X</text></svg>
        <svg viewBox="0 0 38 38"><path d="M0 2h38v35H0z" fill="#a4b0b6"/><circle cx="19" cy="20" r="14" fill="#3d3d3f" stroke="#29292b" stroke-width="3" stroke-dasharray="2 1"/><circle cx="19" cy="20" r="9.500" fill="#555" stroke="#c8c8c8" stroke-width="2"/><path d="M19 20h9M19 20l-5 8M19 20l-5-8" stroke="#c8c8c8" stroke-width="2"/><circle cx="33" cy="5" r="8" fill="#ec3e39"/><text x="33" y="8.500" text-anchor="middle" font-size="10" fill="#fff">2</text></svg>
        <svg viewBox="0 0 38 38"><rect width="38" height="37" rx="6" fill="#310000"/><text x="19" y="26" text-anchor="middle" font-size="22" font-weight="600" fill="#ff9a00">Ai</text></svg>
        <svg viewBox="0 0 38 38"><rect width="38" height="37" rx="6" fill="#49021f"/><text x="19" y="26" text-anchor="middle" font-size="22" font-weight="600" fill="#ff3366">Id</text></svg>
        <svg viewBox="0 0 38 38"><rect width="38" height="37" rx="6" fill="#470137"/><text x="19" y="26" text-anchor="middle" font-size="21" font-weight="600" fill="#ff54f5">Xd</text></svg>
        <svg viewBox="0 0 38 38"><rect x="1" y="1" width="36" height="35" fill="#001e26" stroke="#00b8e6" stroke-width="2"/><text x="19" y="26" text-anchor="middle" font-size="21" font-weight="500" fill="#00c3f5">Ps</text></svg>
        <svg viewBox="0 0 38 38"><rect width="38" height="37" rx="6" fill="#00005b"/><text x="19" y="26" text-anchor="middle" font-size="21" font-weight="600" fill="#9999ff">An</text><circle cx="19" cy="43" r="2.500"/></svg>
        <svg viewBox="0 0 38 38"><path d="M1 8q0-3 4-4l23-4q3 0 4 3l5 28q0 3-3 4l-24 3q-4 0-4-3z" fill="#e2a257"/><circle cx="19" cy="19" r="14" fill="#262626"/><rect x="8" y="8" width="22" height="21" rx="7" fill="#e4e2de"/><path d="M21 18h16l-2 18-6 2-6-2z" fill="#e8502c"/><path d="M33 22h-7v5h6l-.5 5-2.500 1-3-1v-2" fill="none" stroke="#fff" stroke-width="2"/><circle cx="19" cy="43" r="2.500"/></svg>
        <svg viewBox="0 0 38 38"><rect x="1" y="2" width="36" height="33" fill="#232323" stroke="#77848d" stroke-width="1.500"/><text x="5" y="13" font-size="9" fill="#e8e8e8" font-family="Liberation Mono">&gt;_</text></svg>
        <svg viewBox="0 0 38 38"><path d="M27 0l10 4v30l-10 4L11 23l-7 6-4-3 8-7-8-7 4-3 7 6zM27 12l-9 7 9 7z" fill="#1f8fd8"/><path d="M27 0l10 4v30l-10 4z" fill="#35a3ec"/></svg>
        <svg viewBox="0 0 38 38"><path d="M11 13C4-2 25-6 26 8c0 5-3 7-3 11q5 1 9 1c6 10-3 19-14 19C4 39-3 26 5 18q4-1 6-5z" fill="#fcc419"/><path d="M20 6q7 3 6 8-6 2-9-3z" fill="#f0641c"/><circle cx="15" cy="4" r="2.200" fill="#fff"/><circle cx="15.500" cy="4" r="1.200"/><path d="M9 23q7 9 19 4-4 9-13 6z" fill="#eaa70c"/></svg>
        <svg viewBox="0 0 38 38"><path d="M-1 6l20-9L39 6v24L20 41-1 30z" fill="#7a5439"/><path d="M20 17L39 6v24L20 41z" fill="#5e3f2a"/><path d="M19-3L39 6 20 17-1 6z" fill="#6aa84a"/><path d="M-1 6l21 11v4l-4-1-3-3-5-1-3-3-6-2zM39 6L20 17v4l5-1 5-4 4-1 5-4z" fill="#3f7d2c"/><path d="M3 17h2v3H3zM9 24h3v2H9zM4 27h2v2H4zM14 32h2v3h-2zM26 25h2v3h-2zM32 19h2v3h-2zM15 24h2v2h-2z" fill="#b08560"/></svg>
        <svg viewBox="0 0 38 38"><rect width="38" height="38" rx="7" fill="#252525"/><path d="M19 7h-4a4 4 0 0 0 0 8h4z" fill="#f24e1e"/><path d="M19 7h4a4 4 0 0 1 0 8h-4z" fill="#ff7262"/><path d="M19 15h-4a4 4 0 0 0 0 8h4z" fill="#a259ff"/><circle cx="23" cy="19" r="4" fill="#1abcfe"/><path d="M19 23h-4a4 4 0 1 0 4 4z" fill="#0acf83"/></svg>
        <b></b>
        <svg viewBox="0 0 38 38"><circle cx="19" cy="19" r="18.500" fill="#4c5868"/><circle cx="18" cy="19" r="12.500" fill="#1f7df6"/><circle cx="18" cy="21" r="8" fill="#30a4fb"/><path d="M17 17l7 1 13 19h-8z" fill="#363c48"/></svg>
        <svg viewBox="0 0 38 38"><path d="M4 2h30l5 4v30H-1V6z" fill="#360307"/><text x="8" y="25" font-size="18" font-style="italic" font-weight="bold" fill="#fff" font-family="Liberation Serif">f</text></svg>
        <svg viewBox="0 0 38 38"><path d="M4 2h32v28H8z" fill="#c9a878"/><path d="M7 5h26v22H7z" fill="#6b4a2c"/><path d="M-1 9l31-5 3 28-31 5z" fill="#f6f6f6"/><path d="M2 11l26-4 2 22-26 5z" fill="#5c97dc"/><path d="M3 20l26-3 1 12-26 5z" fill="#c9b48f"/><path d="M3 18l26-3 1 7-27 4z" fill="#27559a"/><circle cx="30" cy="26" r="7" fill="#8d9399" stroke="#666" stroke-width="2"/></svg>
        <b></b>
        <svg viewBox="0 0 38 38"><path d="M8-2h14l6 8v12H6z" fill="#eee"/><path d="M15 0h5v10h-5z" fill="#444"/><path d="M0 7h14l3 4h21v25H0z" fill="#62bdee"/></svg>
        <svg viewBox="0 0 38 38"><path d="M-2 8h42v22H-2z" fill="#f5f5f5"/><path d="M4 13h12M4 17h10M4 21h12" stroke="#b9b9c4"/><svg x="25" y="24" width="14" height="15"><use href="#chrome"/></svg></svg>
        <svg viewBox="0 0 38 38"><path d="M-2 5h42v29H-2z" fill="#eef0ee"/><path d="M4 9v20M8 9h12M8 13h14M8 17h12M8 21h14M8 25h12" stroke="#b4bcb4"/><svg x="26" y="25" width="14" height="14"><use href="#finder"/></svg></svg>
        <svg viewBox="0 0 38 38"><path d="M4 0h30l-4 36q-1 2-3 2H11q-2 0-3-2z" fill="#c5c4c6"/><ellipse cx="19" cy="3" rx="15" ry="5" fill="#eee"/><path d="M8 1l5 4 4-5 4 5 5-4 4 4-6 3H12z" fill="#5d6f6d"/><path d="M12 12l3 22M26 12l-3 22M19 12v22" stroke="#dcdcdc" stroke-width="2"/></svg>
      </div>
    </footer>
  </div>
</div>
</div>

<!-- laptop base -->
<svg class="block w-full h-[85px]" viewBox="0 0 2477 85" preserveAspectRatio="none" aria-hidden="true">
  <defs>
    <linearGradient id="top" x1="0" x2="0" y1="0" y2="1"><stop offset="0" stop-color="#bdbdbd"/><stop offset="1" stop-color="#d9d9d9"/></linearGradient>
    <linearGradient id="under" x1="0" x2="0" y1="0" y2="1"><stop offset="0" stop-color="#6e6e6e"/><stop offset=".8" stop-color="#929292"/><stop offset=".82" stop-color="#6c6c6c"/><stop offset="1" stop-color="#7a7a7a"/></linearGradient>
    <linearGradient id="side"><stop offset="0" stop-color="#666"/><stop offset=".12" stop-color="#c6c6c6"/><stop offset=".4" stop-color="#c6c6c6"/><stop offset=".55" stop-color="#8d8d8d"/><stop offset="1" stop-color="#bdbdbd" stop-opacity="0"/></linearGradient>
    <linearGradient id="side2" x1="1" x2="0"><stop offset="0" stop-color="#666"/><stop offset=".12" stop-color="#c6c6c6"/><stop offset=".4" stop-color="#c6c6c6"/><stop offset=".55" stop-color="#8d8d8d"/><stop offset="1" stop-color="#bdbdbd" stop-opacity="0"/></linearGradient>
    <linearGradient id="notch"><stop offset="0" stop-color="#5a5a5a"/><stop offset=".08" stop-color="#dcdcdc"/><stop offset=".5" stop-color="#e6e6e6"/><stop offset=".92" stop-color="#dcdcdc"/><stop offset="1" stop-color="#5a5a5a"/></linearGradient>
  </defs>
  <path d="M85 65l125-3h2060l130 3z" fill="#9a9a9a"/>
  <path d="M116 39h2254q-30 12-80 19-20 7-60 7H250q-40 0-62-9-50-7-72-17z" fill="url(#under)"/>
  <path d="M190 56q60 3 113 3-50 6-93 4zM2296 56q-60 3-113 3 50 6 93 4z" fill="#3c3c3c"/>
  <path d="M116 2q0-2 3-2h2248q3 0 3 2v37H116z" fill="url(#top)"/>
  <path d="M116 1h90v38h-90z" fill="url(#side)"/><path d="M2280 1h90v38h-90z" fill="url(#side2)"/>
  <path d="M116 39h2254M116 .7h2254" stroke="#8a8a8a" stroke-width="1.400"/>
  <path d="M1074 0h330q-4 19-28 19H1102q-24 0-28-19z" fill="url(#notch)"/>
  <path d="M880 56l5-4 5 4zM1571 56l5-4 5 4z" fill="#c8c8c8"/>
</svg>
</main>

<script>
// Ruler and frame grid of the timeline: five frames take 63 px.
const step = 63 / 5, first = 75, last = 182;
const x = f => (f - first) * step;
let r = '<path d="M0 15.500H1400M0 42.500H1400" stroke="#222"/>';
for (let f = first; f <= last; f++)
  r += `<path d="M${x(f)} ${f % 5 ? 15 : 0}V24" stroke="#202020"/>`;
document.getElementById('ruler').innerHTML = r;
let s = '', n = '';
for (let i = 7; i <= 15; i++) s += `<span class="w-[151px] shrink-0">${i}s</span>`;
for (let f = 75; f <= 180; f += 5) n += `<span class="w-[63px] shrink-0 pl-px">${f}</span>`;
document.getElementById('seconds').innerHTML = s;
document.getElementById('numbers').innerHTML = n;

const light = '#868686', dark = '#505050';
let g = '';
const rect = (y, a, b, c, h = 19) => g += `<rect x="${x(a)}" y="${y}" width="${x(b) - x(a)}" height="${h}" fill="${c}"/>`;
const line = (y, f) => g += `<path d="M${x(f)} ${y}v19" stroke="#2b2b2b" stroke-width="1.200"/>`;
const tick = (y, f) => g += `<path d="M${x(f)} ${y}v2" stroke="#222"/>`;
const dot = (y, f) => g += `<ellipse cx="${x(f) + 6.300}" cy="${y + 12}" rx="3" ry="3.300" fill="#1f1f1f"/>`;
const ring = (y, f) => g += `<ellipse cx="${x(f) + 6.300}" cy="${y + 12}" rx="2.500" ry="2.700" fill="none" stroke="#2b2b2b" stroke-width="1.300"/>`;
const flag = (y, f) => { dot(y, f); g += `<path d="M${x(f) + 3.500} ${y + 15}v-8h1l4 4-3 1.500v2.500z" fill="#f80808"/>`; };
const end = (y, f) => g += `<path d="M${x(f) + 9} ${y + 9}v6" stroke="#222" stroke-width="1.600"/>`;
g += '<rect width="1400" height="110" fill="#222"/>';
rect(0, 75, 135, light); rect(0, 135, last, dark);
rect(20, 75, last, light); rect(40, 75, last, light); rect(60, 75, last, light);
rect(80, 75, 81, dark); rect(80, 81, 83, light); rect(80, 83, 135, dark); rect(80, 135, last, light);
rect(100, 75, last, dark, 9);
for (let f = first; f < last; f++) {
  if (f < 135) { line(0, f); dot(0, f); } else tick(0, f);
  if (f === 135) ring(0, f);
  tick(20, f); tick(100, f);
  if (f === 80) end(40, f); else { line(40, f); if (f < 134 || f === 168) dot(40, f); else flag(40, f); }
  line(60, f);
  const red = f !== 168 && (f >= 134 || (f >= 84 && f % 2 === 0 && f !== 92));
  red ? flag(60, f) : dot(60, f);
  if (f === 92 || f === 97) g += `<ellipse cx="${x(f) + 5}" cy="65" rx="2" ry="2.500" fill="none" stroke="#ddd"/>`;
  if (f < 81) { tick(80, f); if (f === 80) end(80, f); }
  else {
    line(80, f);
    if (f < 83 || f === 168) dot(80, f); else if (f < 134) ring(80, f); else flag(80, f);
  }
}
document.getElementById('frames').innerHTML = g;
</script>
</body>
</html>
